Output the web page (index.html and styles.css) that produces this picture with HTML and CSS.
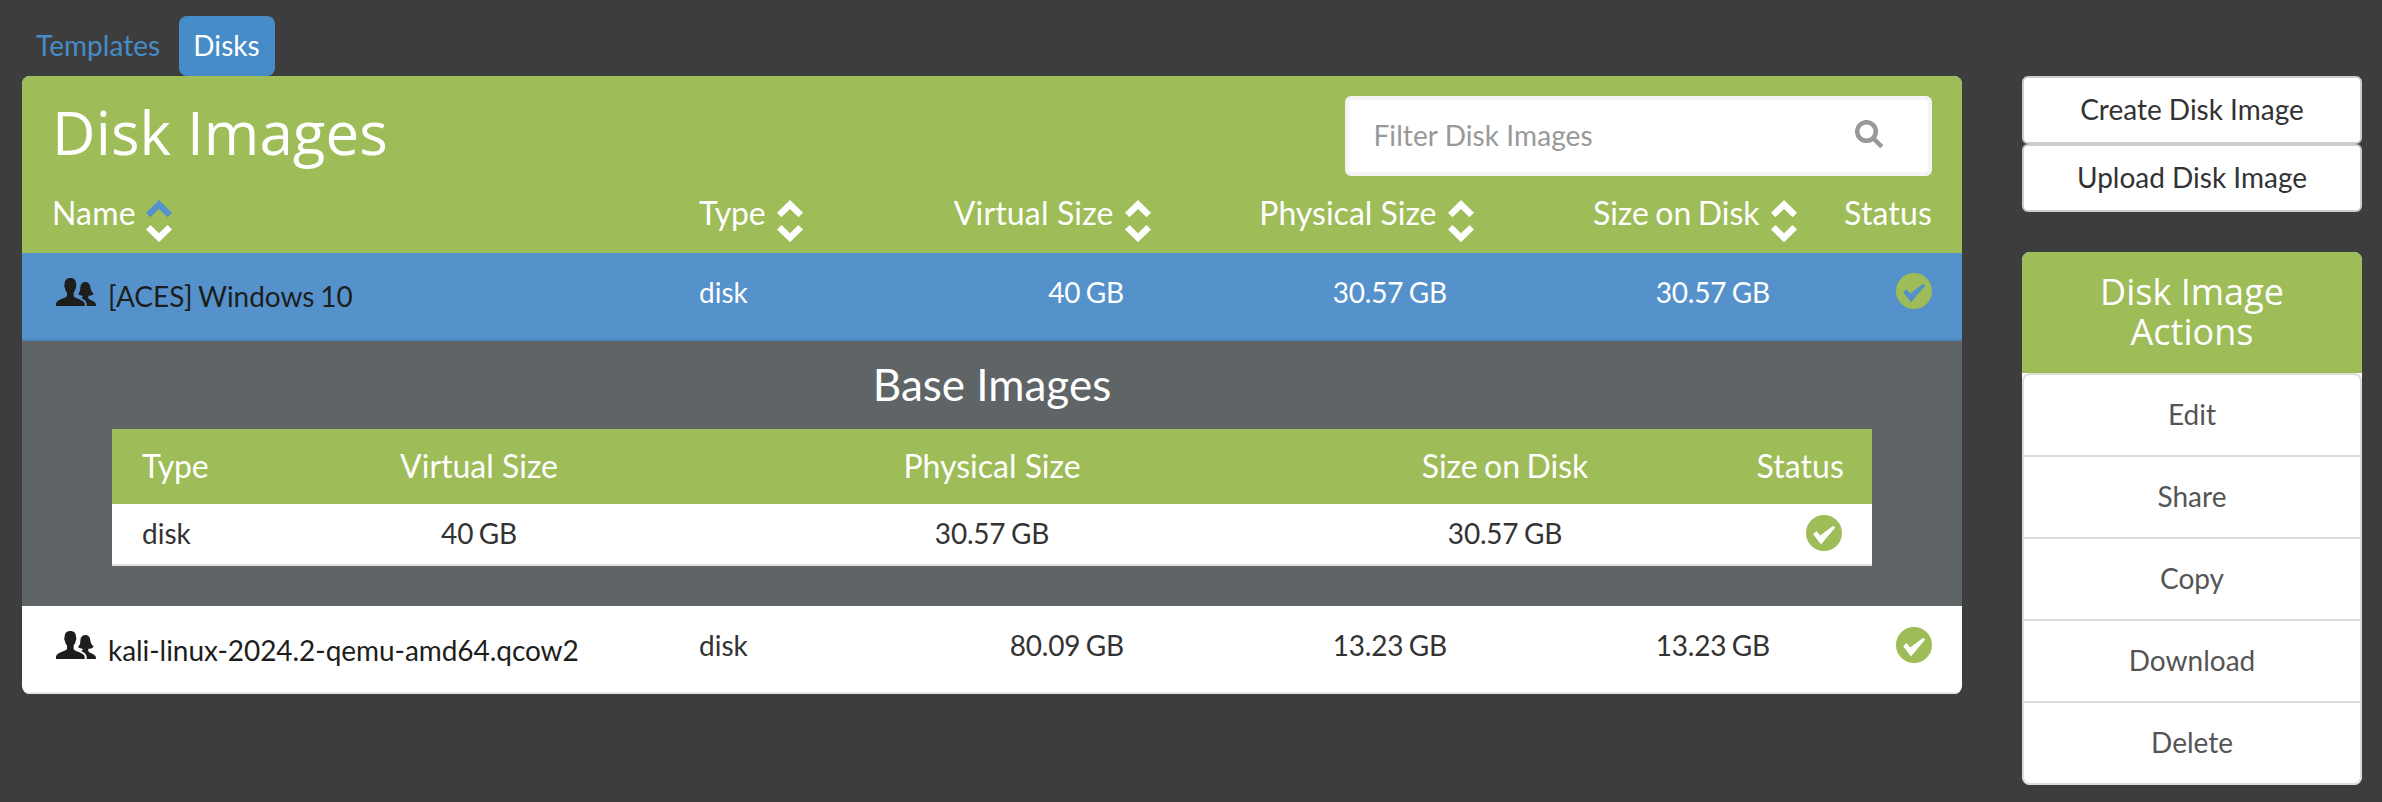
FILE: index.html
```html
<!DOCTYPE html>
<html lang="en">
<head>
<meta charset="utf-8">
<title>Disk Images</title>
<link rel="stylesheet" href="styles.css">
</head>
<body>
<svg class="defs" width="0" height="0">
  <symbol id="users" viewBox="0 0 120 84">
    <path d="M43 0C54 0 60 6 60 18C62 20 61 27 59 30C58 36 56 40 53 43V54C54 58 62 61 70 64C79 68 85 71 86 77V84H0V77C1 71 7 67 16 63C24 60 32 57 33 54V43C29 40 28 36 27 30C24 27 24 20 26 18C26 6 32 0 43 0Z"/>
    <path d="M88 12C98 12 102 19 103 28C104 36 107 42 113 47C109 52 103 53 97 53V61C99 65 108 68 114 71C119 74 120 77 120 84H92V77C91 69 84 64 75 60C79 59 80 57 80 53C74 53 70 52 66 48C72 43 73 36 73 28C74 18 79 12 88 12Z"/>
  </symbol>
  <symbol id="ok" viewBox="0 0 36 36">
    <path fill-rule="evenodd" d="M18 0A18 18 0 1 1 18 36A18 18 0 1 1 18 0ZM7.2 19.2L10.4 16L14.2 20.6L27.2 10.8L29.2 12.6L15 29.4Z"/>
  </symbol>
  <symbol id="up" viewBox="0 0 26 17">
    <path d="M13 0L26 12.8L21.5 17.2L13 9L4.500 17.2L0 12.800Z"/>
  </symbol>
  <symbol id="down" viewBox="0 0 26 17">
    <path d="M13 17.200L26 4.400L21.500 0L13 8.200L4.500 0L0 4.400Z"/>
  </symbol>
</svg>
<div class="page">
  <main class="main">
    <nav class="tabs">
      <a class="tab">Templates</a>
      <a class="tab active">Disks</a>
    </nav>
    <section class="panel">
      <header class="panel-head">
        <div class="title-bar">
          <h1 class="title">Disk Images</h1>
          <div class="search">
            <span class="placeholder">Filter Disk Images</span>
            <svg class="search-icon" viewBox="0 0 28 28"><circle cx="11.500" cy="11.500" r="9.300"/><path d="M18 18L26.800 26.800"/></svg>
          </div>
        </div>
        <div class="grid columns">
          <div class="col">Name<span class="sort"><svg class="on"><use href="#up"/></svg><svg><use href="#down"/></svg></span></div>
          <div class="col type">Type<span class="sort"><svg><use href="#up"/></svg><svg><use href="#down"/></svg></span></div>
          <div class="col end">Virtual Size<span class="sort"><svg><use href="#up"/></svg><svg><use href="#down"/></svg></span></div>
          <div class="col end physical">Physical Size<span class="sort"><svg><use href="#up"/></svg><svg><use href="#down"/></svg></span></div>
          <div class="col end on-disk">Size on Disk<span class="sort"><svg><use href="#up"/></svg><svg><use href="#down"/></svg></span></div>
          <div class="col end">Status</div>
        </div>
      </header>
      <div class="grid row selected">
        <div class="name"><svg class="users"><use href="#users"/></svg><span>[ACES] Windows 10</span></div>
        <div>disk</div>
        <div class="num">40 GB</div>
        <div class="num">30.57 GB</div>
        <div class="num">30.57 GB</div>
        <div class="status"><svg class="ok"><use href="#ok"/></svg></div>
      </div>
      <div class="detail">
        <h2 class="detail-title">Base Images</h2>
        <div class="base">
          <div class="base-grid base-head">
            <div class="type">Type</div><div class="mid">Virtual Size</div><div class="mid physical">Physical Size</div><div class="mid on-disk">Size on Disk</div><div class="last">Status</div>
          </div>
          <div class="base-grid base-row">
            <div>disk</div><div class="mid">40 GB</div><div class="mid">30.57 GB</div><div class="mid">30.57 GB</div><div class="last"><svg class="ok"><use href="#ok"/></svg></div>
          </div>
        </div>
      </div>
      <div class="grid row final">
        <div class="name"><svg class="users"><use href="#users"/></svg><span>kali-linux-2024.2-qemu-amd64.qcow2</span></div>
        <div>disk</div>
        <div class="num">80.09 GB</div>
        <div class="num">13.23 GB</div>
        <div class="num">13.23 GB</div>
        <div class="status"><svg class="ok"><use href="#ok"/></svg></div>
      </div>
    </section>
  </main>
  <aside class="side">
    <button class="btn">Create Disk Image</button>
    <button class="btn">Upload Disk Image</button>
    <section class="actions">
      <h3 class="actions-title">Disk Image Actions</h3>
      <div class="list">
        <a class="item">Edit</a>
        <a class="item">Share</a>
        <a class="item">Copy</a>
        <a class="item">Download</a>
        <a class="item">Delete</a>
      </div>
    </section>
  </aside>
</div>
</body>
</html>
```
FILE: styles.css
```css
* { box-sizing: border-box; }
body {
  margin: 0;
  background: #3d3d3d;
  color: #333;
  font: 28px/40px Lato, sans-serif;
}
.defs { position: absolute; }
svg { display: block; fill: currentColor; flex: none; }
.page {
  display: flex;
  gap: 60px;
  height: 802px;
  padding: 16px 20px 0 22px;
}
.main { width: 1940px; }
.tabs { display: flex; gap: 4px; }
.tab {
  height: 60px;
  padding: 9px 15px 0 14px;
  border-radius: 8px;
  color: #468cc8;
  letter-spacing: 0.05px;
}
.tab.active { background: #468cc8; color: #fff; }
.panel {
  border-radius: 8px;
  overflow: hidden;
  background: #fff;
}
.panel-head {
  height: 177px;
  padding: 20px 30px 0;
  background: #9ebc57;
  color: #fff;
}
.title-bar { display: flex; justify-content: space-between; }
.title {
  margin: 0;
  font: 400 60px/72px "Open Sans", sans-serif;
  letter-spacing: 0.1px;
}
.search {
  display: flex;
  justify-content: space-between;
  width: 587px;
  height: 80px;
  padding: 15px 45px 0 24.5px;
  border: 4px solid #f4f4f4;
  border-radius: 6px;
  background: #fff;
  color: #999;
}
.placeholder { letter-spacing: 0.08px; }
.search-icon {
  width: 28px;
  height: 28px;
  margin-top: 5px;
  fill: none;
  stroke: #999;
  stroke-width: 4.5;
}
.grid {
  display: grid;
  grid-template-columns: 647px 129px 323px 323px 323px 135px;
}
.grid > div { white-space: nowrap; }
.columns { padding-top: 14px; font-size: 32px; line-height: 46px; letter-spacing: 0.15px; }
.type { letter-spacing: -0.3px; }
.physical { letter-spacing: 0; }
.on-disk { letter-spacing: 0; word-spacing: -1.8px; }
.col { display: flex; gap: 11.5px; }
.col:first-child { gap: 10.5px; }
.col.end { justify-content: flex-end; }
.sort { display: flex; flex-direction: column; gap: 8px; padding-top: 10px; }
.sort svg { width: 26px; height: 17px; }
.sort .on { color: #5592cb; }
.row {
  height: 88px;
  padding: 19px 30px 0;
  border-bottom: 2px solid #e4e6e6;
}
.row.selected {
  background: #5592cb;
  border-color: #4a86bc;
  color: #fff;
}
.name {
  display: flex;
  gap: 12px;
  padding: 4px 0 0 4px;
  color: #1d1e1c;
  letter-spacing: -0.05px;
  word-spacing: -1.2px;
}
.users { width: 40px; height: 28px; margin-top: 2px; }
.num {
  padding-right: 27px;
  text-align: right;
  letter-spacing: -0.2px;
  word-spacing: -1.4px;
}
.status { display: flex; justify-content: flex-end; }
.ok { width: 36px; height: 36px; margin-top: 1px; color: #9ebc57; }
.final .ok { margin-top: 2px; }
.final .name { padding-top: 5px; }
.final .users { margin-top: 1px; }
.detail {
  height: 265px;
  padding: 13px 90px 0;
  background: #5f6466;
  color: #fff;
}
.detail-title {
  margin: 0 0 15px;
  font-size: 44px;
  font-weight: 400;
  line-height: 60px;
  text-align: center;
}
.base-grid {
  display: grid;
  grid-template-columns: 80.5px 513px 513px 513px 80.5px;
  padding: 0 30px;
  white-space: nowrap;
}
.base-head {
  height: 75px;
  padding-top: 14px;
  background: #9ebc57;
  font-size: 32px;
  line-height: 46px;
}
.base-head .last { margin-right: -2px; letter-spacing: 0.1px; }
.base-row {
  height: 62px;
  padding-top: 9px;
  border-bottom: 2px solid #dfdfdf;
  background: #fff;
  color: #333;
}
.base-row .mid { letter-spacing: -0.2px; word-spacing: -1.4px; }
.base-row .ok { margin-top: 2px; }
.mid { text-align: center; }
.last { display: flex; justify-content: flex-end; }
.side {
  display: flex;
  flex-direction: column;
  width: 340px;
  padding-top: 60px;
}
.btn {
  height: 68px;
  padding: 0 0 2px;
  border: 2px solid #ccc;
  border-radius: 6px;
  background: #fff;
  color: #333;
  font: inherit;
}
.actions {
  margin-top: 40px;
  border-radius: 8px;
  overflow: hidden;
  background: #fff;
}
.actions-title {
  height: 121px;
  margin: 0;
  padding: 20px 60px 0;
  background: #9ebc57;
  color: #fff;
  font: 400 36px/40px "Open Sans", sans-serif;
  text-align: center;
}
.list { border: 2px solid #ddd; border-radius: 8px; }
.item {
  display: block;
  height: 82px;
  padding-top: 19px;
  border-bottom: 2px solid #ddd;
  color: #555;
  text-align: center;
}
.item:last-child { height: 80px; border-bottom: 0; }
```
